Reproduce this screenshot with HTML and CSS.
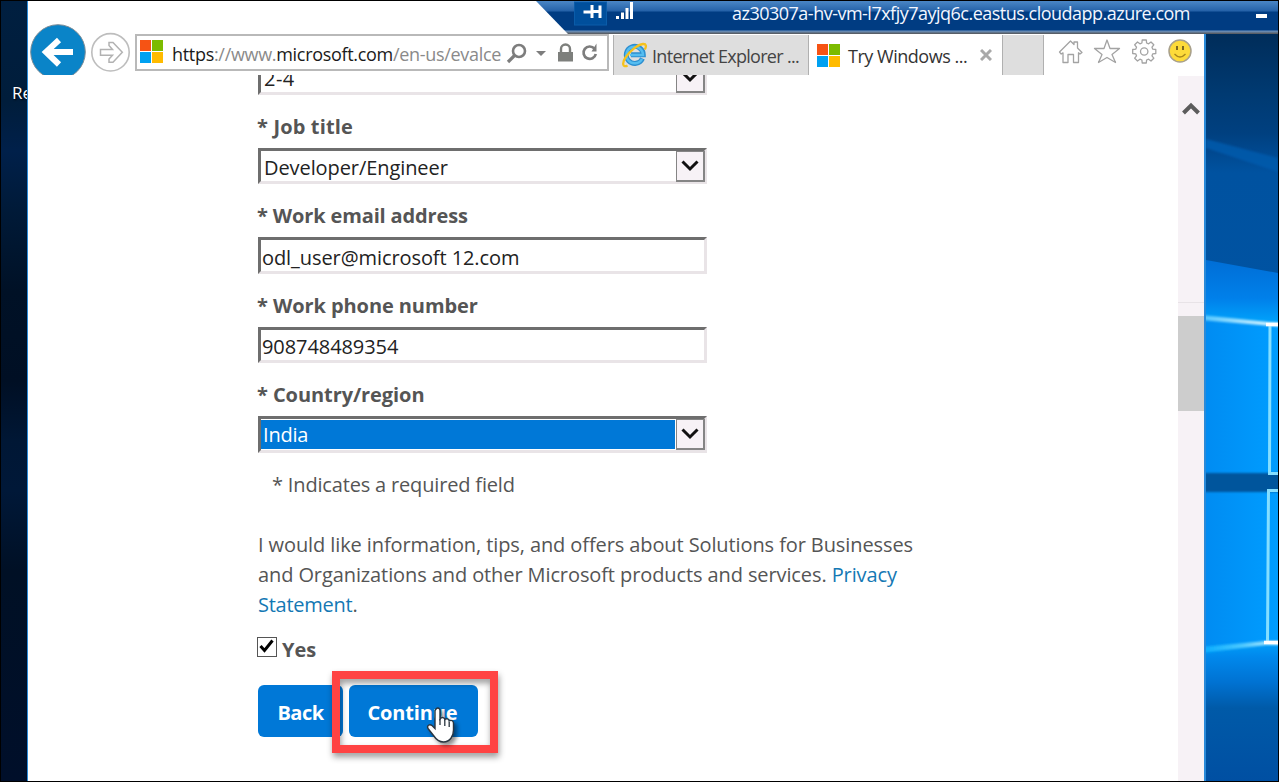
FILE: index.html
```html
<!DOCTYPE html>
<html lang="en">
<head>
<meta charset="utf-8">
<title>Try Windows Server</title>
<link rel="stylesheet" href="styles.css">
</head>
<body>
<div class="desktop">
  <div class="wall-left"><span class="desk-label">Re</span></div>
  <div class="window">
    <div class="toolbar">
      <svg class="nav" width="104" height="74" viewBox="28 2 104 74">
        <circle cx="58" cy="53" r="27.300" fill="#0a84c8" stroke="#7d8c96" stroke-width="1"/>
        <path d="M73 53H46M59 41L46 53L59 65.500" fill="none" stroke="#fff" stroke-width="6"/>
        <circle cx="110.500" cy="53.300" r="18.700" fill="#fff" stroke="#bdbdbd" stroke-width="1.600"/>
        <path d="M100.500 50.500H112.500L109 46.500V43.500H113L122.300 53.300L113 63.300H109V60L112.500 56.200H100.500Z" fill="none" stroke="#b2b2b2" stroke-width="1.500"/>
      </svg>
      <div class="address">
        <span class="mslogo"><i></i><i></i><i></i><i></i></span>
        <span class="url"><b>https</b>://www.<b>microsoft.com</b>/en-us/evalce</span>
        <svg class="addr-icons" width="98" height="32" viewBox="506 37 98 32">
          <g fill="none" stroke="#7d7d7d">
            <circle cx="520" cy="51" r="6" stroke-width="2.600"/>
            <path d="M515.500 55.500L509 62" stroke-width="3.200"/>
            <path d="M595.500 48.700A6.200 6.200 0 1 0 596.800 54" stroke-width="2.700"/>
          </g>
          <path d="M537 51H547L542 56Z" fill="#7d7d7d"/>
          <path d="M559 52H574V61.500H559Z" fill="#7d7f7c"/>
          <path d="M562 52V49A4.500 4.500 0 0 1 571 49V52" fill="none" stroke="#7d7f7c" stroke-width="2.400"/>
          <path d="M592.500 51.500H597.500V43.500Z" fill="#7d7d7d"/>
        </svg>
      </div>
      <div class="tab">
        <svg width="26" height="26" viewBox="0 0 26 26">
          <path d="M20.500 16.500A8.500 8.500 0 1 1 21.300 12.800H9" fill="none" stroke="#2d8fd0" stroke-width="5"/>
          <path d="M20 17A8.300 8.300 0 1 1 21 13H8" fill="none" stroke="#55bdf0" stroke-width="2.500"/>
          <path d="M5.500 23.500C1 26 -.5 21.500 3.500 15.500C8 8.500 16 2.500 21 2C24.500 1.800 24.500 4.500 22.800 7.500" fill="none" stroke="#f5c21d" stroke-width="2.300"/>
        </svg>
        <span class="tab-title">Internet Explorer ...</span>
      </div>
      <div class="tab active">
        <span class="mslogo"><i></i><i></i><i></i><i></i></span>
        <span class="tab-title">Try Windows ...</span>
        <svg class="close" width="12" height="12" viewBox="0 0 12 12"><path d="M1 1L11 11M11 1L1 11" stroke="#a9a9a9" stroke-width="3"/></svg>
      </div>
      <div class="newtab"></div>
      <svg class="tools" width="142" height="30" viewBox="1056 36 142 30" fill="none" stroke="#a3a3a3" stroke-width="1.300" stroke-linejoin="round">
        <path d="M1059.500 52L1070.500 41L1074 44.500V42H1077.500V48L1082 52.500L1080 54L1078.500 52.800V62.500H1073.500V54.500H1068V62.500H1063V52.800L1061.200 54Z"/>
        <path d="M1107 40L1110 48.500H1119.500L1112 54.500L1115.500 62.500L1107 57.500L1098.500 62.500L1102 54.500L1094.500 48.500H1104Z"/>
        <path d="M1141.900 43L1142.200 40H1146.300L1146.600 43L1148.600 43.800L1151 42L1153.800 44.800L1152 47.200L1152.800 49.200L1155.800 49.500V53.500L1152.800 53.800L1152 55.800L1153.800 58.200L1151 61L1148.600 59.200L1146.600 60L1146.300 63H1142.200L1141.900 60L1139.900 59.200L1137.500 61L1134.700 58.200L1136.500 55.800L1135.700 53.800L1132.700 53.500V49.500L1135.700 49.200L1136.500 47.200L1134.700 44.800L1137.500 42L1139.900 43.800Z"/>
        <circle cx="1144.200" cy="51.500" r="3.700"/>
        <circle cx="1180" cy="51" r="11" fill="#fddb3a" stroke="#a8a08c" stroke-width="1.500"/>
        <path d="M1177 46V50M1183 46V50" stroke="#7c6820" stroke-width="2"/>
        <path d="M1174.500 54Q1180 60 1185.500 54" stroke="#a8871c" stroke-width="1.300"/>
      </svg>
    </div>
    <div class="page">
      <div class="form">
        <div class="field select cut"><span class="range">2-4</span><div class="drop"><svg width="18" height="12" viewBox="0 0 18 12"><path d="M1.500 1.500L9 9L16.500 1.500" fill="none" stroke="#111" stroke-width="3"/></svg></div></div>
        <div class="label job">* Job title</div>
        <div class="field select"><span>Developer/Engineer</span><div class="drop"><svg width="18" height="12" viewBox="0 0 18 12"><path d="M1.500 1.500L9 9L16.500 1.500" fill="none" stroke="#111" stroke-width="3"/></svg></div></div>
        <div class="label email">* Work email address</div>
        <div class="field tall"><span>odl_user@microsoft 12.com</span></div>
        <div class="label">* Work phone number</div>
        <div class="field"><span>908748489354</span></div>
        <div class="label">* Country/region</div>
        <div class="field select tall country"><div class="sel">India</div><div class="drop"><svg width="18" height="12" viewBox="0 0 18 12"><path d="M1.500 1.500L9 9L16.500 1.500" fill="none" stroke="#111" stroke-width="3"/></svg></div></div>
        <p class="note">* Indicates a required field</p>
        <p class="consent">I would like information, tips, and offers about Solutions for Businesses<br>and Organizations and other Microsoft products and services. <a>Privacy</a><br><a class="statement">Statement</a>.</p>
        <div class="yes"><span class="check"><svg width="17" height="17" viewBox="0 0 17 17"><path d="M2.500 8L6.500 12.500L14.500 2.500" fill="none" stroke="#000" stroke-width="3"/></svg></span><b>Yes</b></div>
        <div class="buttons">
          <div class="btn back">Back</div>
          <div class="btn next">Continue</div>
          <div class="highlight"></div>
          <svg class="hand" width="36" height="40" viewBox="0 0 36 40"><path d="M11 3C13 1 15 2.500 15 4.500V13C17 10.500 19.500 11.500 19.800 13.500C21.500 11.800 24 13 24.200 15C26.500 13.500 28.500 15 28.500 17.500V24C28.500 30 25 36 18.500 36C13 36 10.500 32.500 8.500 29.500L3 22.500C1.500 19.500 4.500 17.800 7 19.500L10 22.500V4.500Z" fill="#fff" stroke="#2a3540" stroke-width="1.400"/><path d="M15 13V19M19.800 14V20M24.200 16V21" stroke="#2a3540" stroke-width="1.300"/></svg>
        </div>
      </div>
      <div class="scroll"><svg class="up" width="18" height="13" viewBox="0 0 18 13"><path d="M1.500 11L9 3.500L16.500 11" fill="none" stroke="#5c5c5c" stroke-width="4"/></svg><div class="mark"></div><div class="thumb"></div></div>
    </div>
  </div>
  <svg class="wall-right" width="72" height="780" viewBox="1206 1 72 780">
    <defs>
      <linearGradient id="sky" x1="0" y1="0" x2="0" y2="1"><stop offset="0" stop-color="#002a55"/><stop offset=".05" stop-color="#002e5c"/><stop offset=".12" stop-color="#003a72"/><stop offset=".17" stop-color="#004080"/><stop offset=".22" stop-color="#0052a0"/><stop offset="1" stop-color="#0057aa"/></linearGradient>
      <linearGradient id="glow" x1="0" y1="0" x2="0" y2="1"><stop offset="0" stop-color="#006ed6"/><stop offset=".6" stop-color="#0080ea"/><stop offset="1" stop-color="#00a4fc"/></linearGradient>
      <linearGradient id="low" x1="0" y1="0" x2="0" y2="1"><stop offset="0" stop-color="#00a2fc"/><stop offset=".12" stop-color="#0088ec"/><stop offset=".3" stop-color="#0072d2"/><stop offset=".48" stop-color="#005aa8"/><stop offset="1" stop-color="#004fa2"/></linearGradient>
      <linearGradient id="pane" x1="0" y1="0" x2="1" y2="0"><stop offset="0" stop-color="#008cf2"/><stop offset="1" stop-color="#009dff"/></linearGradient>
      <linearGradient id="beam" x1="0" y1="0" x2="1" y2="0"><stop offset="0" stop-color="#4cc4ff"/><stop offset=".5" stop-color="#a5e2ff"/><stop offset="1" stop-color="#e8fbff"/></linearGradient>
      <linearGradient id="beam2" x1="0" y1="0" x2="1" y2="0"><stop offset="0" stop-color="#00aaff"/><stop offset=".5" stop-color="#4cc8ff"/><stop offset="1" stop-color="#d8f6ff"/></linearGradient>
      <filter id="soft" x="-20%" y="-50%" width="140%" height="200%"><feGaussianBlur stdDeviation="1"/></filter>
    </defs>
    <rect x="1206" y="1" width="72" height="780" fill="url(#sky)"/>
    <path d="M1206 139L1278 158V172L1206 148Z" fill="#005cae" opacity=".8" filter="url(#soft)"/>
    <path d="M1206 260L1278 273V324H1206Z" fill="url(#glow)"/>
    <path d="M1206 318L1278 325V640L1206 650Z" fill="url(#pane)"/>
    <path d="M1206 650L1278 640V782H1206Z" fill="url(#low)"/>
    <path d="M1200 473H1284V492H1200Z" fill="#00559c" filter="url(#soft)"/>
    <path d="M1200 315L1268 322L1284 323V327L1200 320Z" fill="url(#beam)" filter="url(#soft)"/>
    <path d="M1200 647L1266 641H1284V645H1266L1200 653Z" fill="url(#beam2)" filter="url(#soft)"/>
    <path d="M1270 325L1269.500 473.500H1278" fill="none" stroke="#84deff" stroke-width="3"/>
    <path d="M1278 490.500H1268.500L1267.500 642" fill="none" stroke="#84deff" stroke-width="3"/>
    <path d="M1266 324.500H1284M1264 642.500H1284" stroke="#fff" stroke-width="3.500"/>
  </svg>
  <div class="rdp">
    <svg class="rdp-icons" width="104" height="33" viewBox="536 1 104 33"><rect x="574.500" y="2" width="32" height="23" fill="#004f9c" stroke="#0a5ca9"/><path d="M583.500 12H592M592 5V18M592 11.500H600M600 5.500V18" fill="none" stroke="#fff" stroke-width="3"/><path d="M616 16H619V19H616ZM621 12.500H624V19H621ZM625.500 8H628.500V19H625.500ZM630 2H633V19H630Z" fill="#fff"/></svg>
    <span class="host">az30307a-hv-vm-l7xfjy7ayjq6c.eastus.cloudapp.azure.com</span>
    <span class="min"></span>
  </div>
</div>
</body>
</html>
```
FILE: styles.css
```css
* { box-sizing: border-box; }
body { margin: 0; font-family: "Open Sans", "Noto Sans", sans-serif; background: #000; }
svg { display: block; flex: none; }
.desktop { position: relative; display: flex; width: 1279px; height: 782px; padding: 1px; background: #000; overflow: hidden; }
.wall-left { width: 26px; overflow: hidden; background: linear-gradient(#001f40 0, #001d3b 100px, #00204a 150px, #001a38 210px, #001126 290px, #000f24 380px, #001735 440px, #001838 490px, #001025 570px, #000f2a); padding: 80px 0 0 11px; }
.desk-label { font-size: 17px; line-height: 24px; color: #fff; text-shadow: 1px 1px 2px #000; }
.window { width: 1179px; background: #fff; border: solid #2a8ad8; border-width: 0 2px 0 1px; display: flex; flex-direction: column; overflow: hidden; }
.toolbar { display: flex; height: 74px; flex: none; }
.nav { width: 104px; }
.address { display: flex; align-items: center; margin: 33px 0 0 3px; width: 474px; height: 37px; border: 2px solid #b9b9b9; padding-left: 3px; }
.mslogo { display: grid; grid-template-columns: 11px 11px; grid-template-rows: 11px 11px; gap: 1px; flex: none; }
.mslogo i:nth-child(1) { background: #f65314; }
.mslogo i:nth-child(2) { background: #7cbb00; }
.mslogo i:nth-child(3) { background: #00a1f1; }
.mslogo i:nth-child(4) { background: #ffbb00; }
.address .mslogo { margin-top: -2px; }
.url { width: 330px; margin-left: 9px; padding-top: 2px; overflow: hidden; white-space: nowrap; font-size: 18px; letter-spacing: -.31px; color: #8a8a8a; flex: none; }
.url b { font-weight: 400; color: #1a1a1a; }
.addr-icons { margin: 0 0 0 3px; }
.tab { display: flex; align-items: center; margin: 34px 0 0 4px; width: 196px; height: 40px; background: #dedede; border-left: 1px solid #b0b0b0; border-right: 1px solid #b0b0b0; font-size: 18px; color: #444; padding-left: 8px; white-space: nowrap; }
.tab-title { margin-left: 4px; padding-top: 2px; letter-spacing: -.7px; }
.tab.active { background: #fff; border: 0; margin-left: 0; width: 193px; color: #333; padding-left: 8px; }
.active .tab-title { margin-left: 8px; letter-spacing: -.48px; }
.close { margin-left: 13px; }
.newtab { width: 42px; height: 40px; margin-top: 34px; background: #dedede; border: solid #b0b0b0; border-width: 0 1px; }
.tools { margin: 35px 0 0 12px; }
.page { display: flex; flex: 1; min-height: 0; }
.form { width: 1150px; flex: none; padding: 1px 0 0 230px; overflow: hidden; font-size: 20px; letter-spacing: -.08px; color: #555; }
.field { display: flex; align-items: center; width: 449px; height: 36px; border: 3px solid; border-color: #6e6e6e #e9e4e7 #e9e4e7 #6e6e6e; color: #222; padding: 3px 0 0 1px; white-space: nowrap; }
.field.select { justify-content: space-between; padding: 0 0 0 3px; }
.field.select span { padding-top: 3px; }
.range { letter-spacing: .5px; }
.drop { display: flex; align-items: center; justify-content: center; width: 29px; height: 31px; flex: none; margin-right: -1px; background: #f7f2f6; border: solid #858585; border-width: 1px 2px 2px 1px; }
.label { height: 53px; margin-left: -1px; padding-top: 17px; line-height: 30px; font-weight: 700; }
.label.job { letter-spacing: .15px; }
.label.email { letter-spacing: -.14px; }
.note, .consent { margin: 0; }
.cut { margin-top: -17px; }
.tall { height: 37px; }
.sel { flex: 1; height: 29px; background: #0078d7; color: #fff; line-height: 30px; padding-left: 2px; margin-right: 1px; letter-spacing: -.2px; }
.field.country { padding-left: 0; }
.note { padding: 17px 0 0 14px; line-height: 30px; letter-spacing: -.17px; }
.consent { margin-top: 30px; line-height: 30px; letter-spacing: -.1px; }
.consent a { color: #1478b4; }
.statement { letter-spacing: -.25px; }
.yes { display: flex; align-items: center; margin-top: 13px; height: 30px; gap: 5px; }
.yes b { padding-top: 2px; }
.check { width: 20px; height: 20px; border: 1px solid #555; margin: -2px 0 0 -1px; }
.buttons { position: relative; display: flex; gap: 6px; margin-top: 22px; }
.btn { display: flex; align-items: center; justify-content: center; height: 52px; border-radius: 6px; background: #0078d7; color: #fff; font-weight: 700; padding-top: 3px; letter-spacing: -.14px; }
.back { width: 85px; letter-spacing: -.5px; }
.next { width: 129px; padding-right: 2px; }
.highlight { position: absolute; left: 74px; top: -14px; width: 166px; height: 82px; border: 8px solid #ff4343; filter: drop-shadow(1px 4px 3px rgba(0,0,0,.4)); }
.hand { position: absolute; left: 167px; top: 21px; filter: drop-shadow(3px 3px 2px rgba(0,0,0,.45)); }
.scroll { width: 26px; background: #f7f2f6; display: flex; flex-direction: column; align-items: center; padding-top: 26px; margin-top: 1px; }
.mark { width: 26px; height: 1px; background: #e8e3e7; margin-top: 187px; flex: none; }
.thumb { width: 26px; height: 95px; background: #cdcdcd; margin-top: 13px; flex: none; }
.rdp { position: absolute; left: 536px; top: 1px; width: 742px; height: 33px; display: flex; clip-path: polygon(0 0, 100% 0, 100% 100%, 32px 100%); background: linear-gradient(#4a86c5 0, #2562a8 10px, #003c82 11px, #003c82 29px, #6b92c0 30px, #555 33px); }
.host { margin-left: 92px; font-size: 18px; line-height: 25px; letter-spacing: -.507px; color: #f2f6ff; white-space: nowrap; }
.min { width: 11px; height: 4px; background: #fff; margin: 13px 0 0 66px; }
```
